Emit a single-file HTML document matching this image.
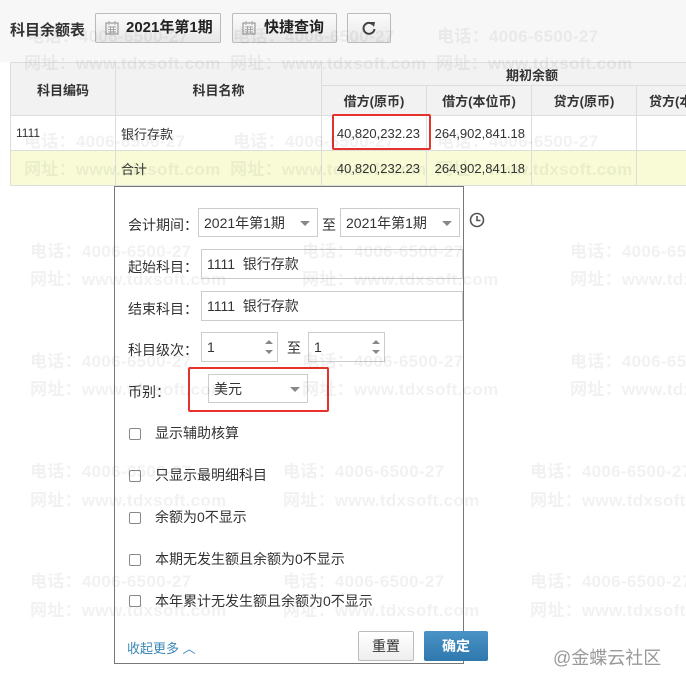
<!DOCTYPE html>
<html><head><meta charset="utf-8">
<style>
*{box-sizing:border-box;margin:0;padding:0}
html{width:686px;height:678px;overflow:hidden}
body{width:686px;height:678px;overflow:hidden;background:#fff;font-family:"Liberation Sans","Noto Sans CJK SC",sans-serif;font-size:13px;color:#333;position:relative}
.top{position:absolute;left:0;top:0;width:686px;height:62px;background:#f7f7f7}
.wm{position:absolute;color:rgba(0,0,0,0.055);font-weight:bold;font-size:17px;white-space:nowrap;line-height:1;z-index:5;pointer-events:none;letter-spacing:0.3px}
.btn{position:absolute;top:13px;height:30px;border:1px solid #bbb;border-radius:2px;background:linear-gradient(#fbfbfb,#e8e8e8);font-size:15px;line-height:28px;color:#222}
table{position:absolute;left:10px;top:62px;border-collapse:collapse;font-size:13px;table-layout:fixed;width:730px}
td{border:1px solid #ddd;height:30px}
th{border:1px solid #ddd;background:#f2f2f2;font-weight:bold;font-size:13px;color:#333}
.num{text-align:right;padding-right:6px}
.pop{position:absolute;left:114px;top:186px;width:350px;height:478px;border:1px solid #777;background:#fff}
.lbl{position:absolute;font-size:14px;color:#333}
.inp{position:absolute;border:1px solid #ccc;background:#fff;font-size:14px;padding-left:5px;line-height:28px;color:#333}
.arr{position:absolute;right:7px;top:12px;border-left:5px solid transparent;border-right:5px solid transparent;border-top:5px solid #888}
.cb{position:absolute;left:14px;width:12px;height:12px;border:1px solid #888;border-radius:2px}
.ct{position:absolute;left:40px;font-size:14px;color:#333}
.red{position:absolute;border:2px solid #e5322d;border-radius:2px}
</style></head><body>
<div class="top"></div>
<div style="position:absolute;left:10px;top:19px;font-size:15px;font-weight:bold;color:#333">科目余额表</div>
<div class="btn" style="left:95px;width:126px;padding-left:30px;font-weight:bold">2021年第1期
<svg style="position:absolute;left:9px;top:6px" width="14" height="15" viewBox="0 0 14 15"><rect x="1" y="3" width="12" height="11" fill="none" stroke="#888"/><path d="M4 1v4M10 1v4M3 7h8M3 9.5h8M3 12h8M5.5 6v7M8.5 6v7" stroke="#aaa"/></svg></div>
<div class="btn" style="left:232px;width:105px;padding-left:31px;font-weight:bold">快捷查询
<svg style="position:absolute;left:9px;top:6px" width="14" height="15" viewBox="0 0 14 15"><rect x="1" y="3" width="12" height="11" fill="none" stroke="#888"/><path d="M4 1v4M10 1v4M3 7h8M3 9.5h8M3 12h8M5.5 6v7M8.5 6v7" stroke="#aaa"/></svg></div>
<div class="btn" style="left:347px;width:44px">
<svg style="position:absolute;left:13px;top:6px" width="16" height="16" viewBox="0 0 16 16"><path d="M12 4.5A5.5 5.5 0 1 0 13.5 9" fill="none" stroke="#444" stroke-width="2"/><path d="M9 2l5 0-1 5z" fill="#444"/></svg></div>

<table>
<colgroup><col style="width:105px"><col style="width:206px"><col style="width:105px"><col style="width:105px"><col style="width:105px"><col style="width:104px"></colgroup>
<tr><th rowspan="2" style="height:53px">科目编码</th><th rowspan="2">科目名称</th><th colspan="4" style="height:23px;text-align:left;padding-left:184px">期初余额</th></tr>
<tr><th style="height:30px">借方(原币)</th><th>借方(本位币)</th><th>贷方(原币)</th><th style="text-align:left;padding-left:12px">贷方(本位币)</th></tr>
<tr><td style="height:35px;padding-left:5px;font-size:12px">1111</td><td style="padding-left:5px">银行存款</td><td class="num">40,820,232.23</td><td class="num">264,902,841.18</td><td></td><td></td></tr>
<tr style="background:#f8fbd6"><td style="height:35px"></td><td style="padding-left:5px">合计</td><td class="num">40,820,232.23</td><td class="num">264,902,841.18</td><td></td><td></td></tr>
</table>
<div class="red" style="left:332px;top:114px;width:99px;height:36px"></div>

<div class="pop">
<div class="lbl" style="left:13px;top:28px">会计期间：</div>
<div class="inp" style="left:83px;top:21px;width:120px;height:29px">2021年第1期<span class="arr"></span></div>
<div class="lbl" style="left:207px;top:28px">至</div>
<div class="inp" style="left:225px;top:21px;width:120px;height:29px">2021年第1期<span class="arr"></span></div>
<svg style="position:absolute;left:354px;top:25px" width="16" height="16" viewBox="0 0 16 16"><circle cx="8" cy="8" r="6.5" fill="none" stroke="#555" stroke-width="1.6"/><path d="M8 4v4.5h3.5" fill="none" stroke="#555" stroke-width="1.6"/></svg>
<div class="lbl" style="left:13px;top:70px">起始科目：</div>
<div class="inp" style="left:86px;top:62px;width:262px;height:30px">1111&nbsp;&nbsp;银行存款</div>
<div class="lbl" style="left:13px;top:112px">结束科目：</div>
<div class="inp" style="left:86px;top:104px;width:262px;height:30px">1111&nbsp;&nbsp;银行存款</div>
<div class="lbl" style="left:13px;top:153px">科目级次：</div>
<div class="inp" style="left:86px;top:145px;width:77px;height:30px">1<span style="position:absolute;right:4px;top:7px;border-left:4px solid transparent;border-right:4px solid transparent;border-bottom:4px solid #888"></span><span style="position:absolute;right:4px;bottom:7px;border-left:4px solid transparent;border-right:4px solid transparent;border-top:4px solid #888"></span></div>
<div class="lbl" style="left:172px;top:151px">至</div>
<div class="inp" style="left:193px;top:145px;width:77px;height:30px">1<span style="position:absolute;right:4px;top:7px;border-left:4px solid transparent;border-right:4px solid transparent;border-bottom:4px solid #888"></span><span style="position:absolute;right:4px;bottom:7px;border-left:4px solid transparent;border-right:4px solid transparent;border-top:4px solid #888"></span></div>
<div class="lbl" style="left:13px;top:195px">币别：</div>
<div class="inp" style="left:93px;top:187px;width:100px;height:29px">美元<span class="arr" style="top:12px"></span></div>
<div class="cb" style="top:241px"></div><div class="ct" style="top:236px">显示辅助核算</div>
<div class="cb" style="top:283px"></div><div class="ct" style="top:278px">只显示最明细科目</div>
<div class="cb" style="top:325px"></div><div class="ct" style="top:320px">余额为0不显示</div>
<div class="cb" style="top:367px"></div><div class="ct" style="top:362px">本期无发生额且余额为0不显示</div>
<div class="cb" style="top:408px"></div><div class="ct" style="top:404px">本年累计无发生额且余额为0不显示</div>
<div style="position:absolute;left:12px;top:451px;font-size:13px;color:#3a86b8">收起更多 ︿</div>
<div style="position:absolute;left:243px;top:444px;width:56px;height:30px;border:1px solid #bbb;border-radius:2px;background:linear-gradient(#fff,#eee);text-align:center;line-height:28px;font-size:14px">重置</div>
<div style="position:absolute;left:309px;top:444px;width:64px;height:30px;border-radius:2px;background:linear-gradient(#4a93c6,#2f78ad);text-align:center;line-height:30px;font-size:14px;color:#fff;font-weight:bold">确定</div>
</div>
<div class="red" style="left:188px;top:367px;width:141px;height:45px"></div>
<div style="position:absolute;left:553px;top:644px;font-size:18px;color:#999">@金蝶云社区</div>

<div class="wm" style="left:27px;top:28px">电话：4006-6500-27</div><div class="wm" style="left:233px;top:28px">电话：4006-6500-27</div><div class="wm" style="left:437px;top:28px">电话：4006-6500-27</div>
<div class="wm" style="left:24px;top:55px">网址：www.tdxsoft.com</div><div class="wm" style="left:230px;top:55px">网址：www.tdxsoft.com</div><div class="wm" style="left:436px;top:55px">网址：www.tdxsoft.com</div>
<div class="wm" style="left:24px;top:133px">电话：4006-6500-27</div><div class="wm" style="left:233px;top:133px">电话：4006-6500-27</div><div class="wm" style="left:437px;top:133px">电话：4006-6500-27</div>
<div class="wm" style="left:24px;top:161px">网址：www.tdxsoft.com</div><div class="wm" style="left:230px;top:161px">网址：www.tdxsoft.com</div><div class="wm" style="left:436px;top:161px">网址：www.tdxsoft.com</div>
<div class="wm" style="left:30px;top:243px">电话：4006-6500-27</div><div class="wm" style="left:302px;top:243px">电话：4006-6500-27</div><div class="wm" style="left:570px;top:243px">电话：4006-6500-27</div>
<div class="wm" style="left:30px;top:271px">网址：www.tdxsoft.com</div><div class="wm" style="left:302px;top:271px">网址：www.tdxsoft.com</div><div class="wm" style="left:570px;top:271px">网址：www.tdxsoft.com</div>
<div class="wm" style="left:30px;top:353px">电话：4006-6500-27</div><div class="wm" style="left:302px;top:353px">电话：4006-6500-27</div><div class="wm" style="left:570px;top:353px">电话：4006-6500-27</div>
<div class="wm" style="left:30px;top:381px">网址：www.tdxsoft.com</div><div class="wm" style="left:302px;top:381px">网址：www.tdxsoft.com</div><div class="wm" style="left:570px;top:381px">网址：www.tdxsoft.com</div>
<div class="wm" style="left:30px;top:463px">电话：4006-6500-27</div><div class="wm" style="left:283px;top:463px">电话：4006-6500-27</div><div class="wm" style="left:530px;top:463px">电话：4006-6500-27</div>
<div class="wm" style="left:30px;top:492px">网址：www.tdxsoft.com</div><div class="wm" style="left:283px;top:492px">网址：www.tdxsoft.com</div><div class="wm" style="left:530px;top:492px">网址：www.tdxsoft.com</div>
<div class="wm" style="left:30px;top:573px">电话：4006-6500-27</div><div class="wm" style="left:283px;top:573px">电话：4006-6500-27</div><div class="wm" style="left:530px;top:573px">电话：4006-6500-27</div>
<div class="wm" style="left:30px;top:602px">网址：www.tdxsoft.com</div><div class="wm" style="left:283px;top:602px">网址：www.tdxsoft.com</div><div class="wm" style="left:530px;top:602px">网址：www.tdxsoft.com</div>
</body></html>
